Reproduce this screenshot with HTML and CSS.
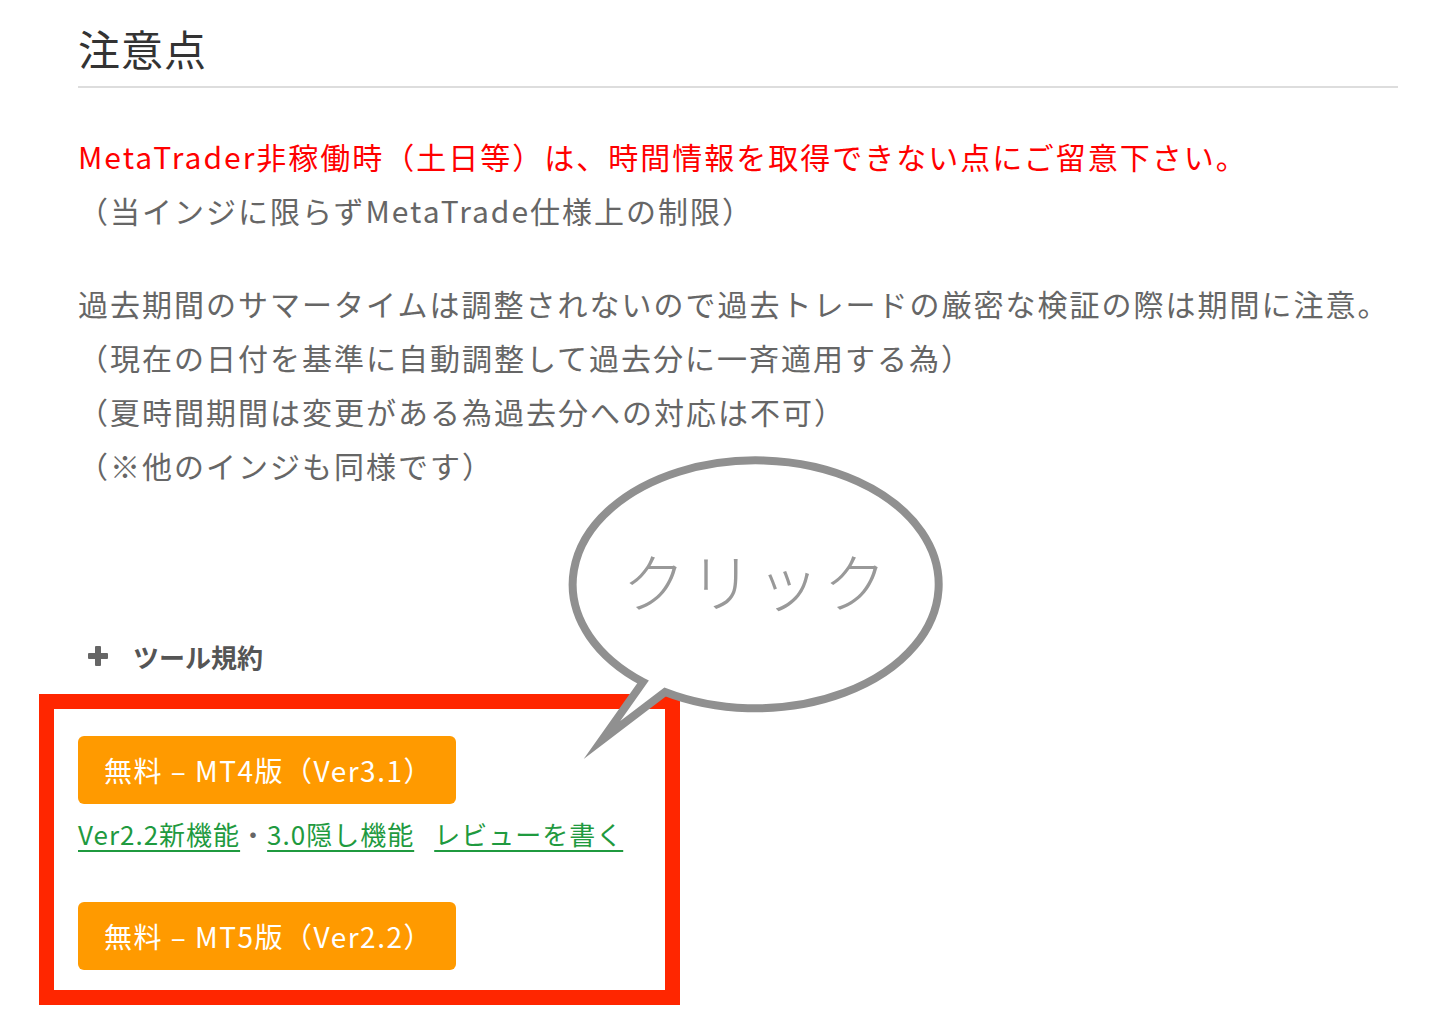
FILE: index.html
```html
<!DOCTYPE html>
<html lang="ja">
<head>
    <meta charset="UTF-8">
    <meta name="viewport" content="width=device-width, initial-scale=1.0">
    <title>注意点</title>
    <link rel="stylesheet" href="styles.css">
</head>
<body>

<div class="page">
    <h2 class="section-title">注意点</h2>

    <p class="note">
        <span class="warn">MetaTrader非稼働時（土日等）は、時間情報を取得できない点にご留意下さい。</span><br>
        （当インジに限らずMetaTrade仕様上の制限）
    </p>

    <p class="note note-second">
        過去期間のサマータイムは調整されないので過去トレードの厳密な検証の際は期間に注意。<br>
        （現在の日付を基準に自動調整して過去分に一斉適用する為）<br>
        （夏時間期間は変更がある為過去分への対応は不可）<br>
        （※他のインジも同様です）
    </p>

    <div class="toggle">
        <svg class="toggle-icon" width="20" height="20" viewBox="0 0 20 20">
            <rect x="0" y="7" width="20" height="6" rx="1" fill="#666"/>
            <rect x="7" y="0" width="6" height="20" rx="1" fill="#666"/>
        </svg>
        <span>ツール規約</span>
    </div>

    <div class="download-box">
        <a class="download-btn" href="#">無料 – MT4版（Ver3.1）</a>
        <div class="links">
            <a href="#">Ver2.2新機能</a><span class="sep">・</span><a href="#">3.0隠し機能</a><a class="review" href="#">レビューを書く</a>
        </div>
        <a class="download-btn btn-second" href="#">無料 – MT5版（Ver2.2）</a>
    </div>

    <!-- 吹き出し -->
    <svg class="bubble" width="400" height="320" viewBox="0 0 400 320">
        <path d="M 105 242 A 183 124 0 1 0 83 232 L 42 290 Z" fill="#fff" stroke="#909090" stroke-width="8" stroke-linejoin="miter" stroke-miterlimit="10"/>
        <text x="196" y="157" text-anchor="middle" class="bubble-text">クリック</text>
    </svg>
</div>

</body>
</html>
```

FILE: styles.css
```css
/* 全体 */
body {
    font-family: "Noto Sans CJK JP", "Noto Sans", sans-serif;
    margin: 0;
    padding: 0;
    background-color: #fff;
    color: #666;
}
.page {
    position: relative;
    margin: 0 34px 0 78px;
    padding-bottom: 25px;
}

/* 見出し */
.section-title {
    margin: 0;
    padding: 18px 0 8px;
    font-size: 42px;
    line-height: 60px;
    font-weight: normal;
    letter-spacing: 1px;
    color: #333;
    border-bottom: 2px solid #ddd;
}

/* 本文 */
.note {
    margin: 41px 0 0;
    font-size: 30px;
    line-height: 54px;
    letter-spacing: 2px;
    color: #666;
}
.note-second {
    margin-top: 39px;
}
.warn {
    color: #ff0000;
}

/* ツール規約 */
.toggle {
    display: flex;
    align-items: center;
    margin-top: 144px;
    height: 40px;
    font-size: 26px;
    font-weight: bold;
    color: #555;
}
.toggle-icon {
    margin-left: 10px;
    margin-right: 25px;
}

/* ダウンロード枠 */
.download-box {
    box-sizing: border-box;
    width: 641px;
    margin: 18px 0 0 -39px;
    padding: 27px 24px 20px;
    border: 15px solid #ff2600;
}
.download-btn {
    display: block;
    box-sizing: border-box;
    width: 378px;
    height: 68px;
    padding-left: 26px;
    line-height: 68px;
    font-size: 28px;
    letter-spacing: 1.5px;
    color: #fff;
    background-color: #ff9a00;
    border-radius: 6px;
    text-decoration: none;
}
.btn-second {
    margin-top: 48px;
}
.links {
    margin-top: 10px;
    line-height: 40px;
    font-size: 26px;
    letter-spacing: 1px;
    white-space: nowrap;
}
.links a {
    color: #1f9a3f;
    text-decoration: underline;
    text-decoration-thickness: 2px;
    text-underline-offset: 5px;
}
.links .sep {
    color: #666;
}
.links .review {
    margin-left: 20px;
}

/* 吹き出し */
.bubble {
    position: absolute;
    left: 482px;
    top: 450px;
}
.bubble-text {
    font-family: "Noto Sans CJK JP", sans-serif;
    font-size: 64px;
    font-weight: 300;
    letter-spacing: 3px;
    fill: #999;
}
```
